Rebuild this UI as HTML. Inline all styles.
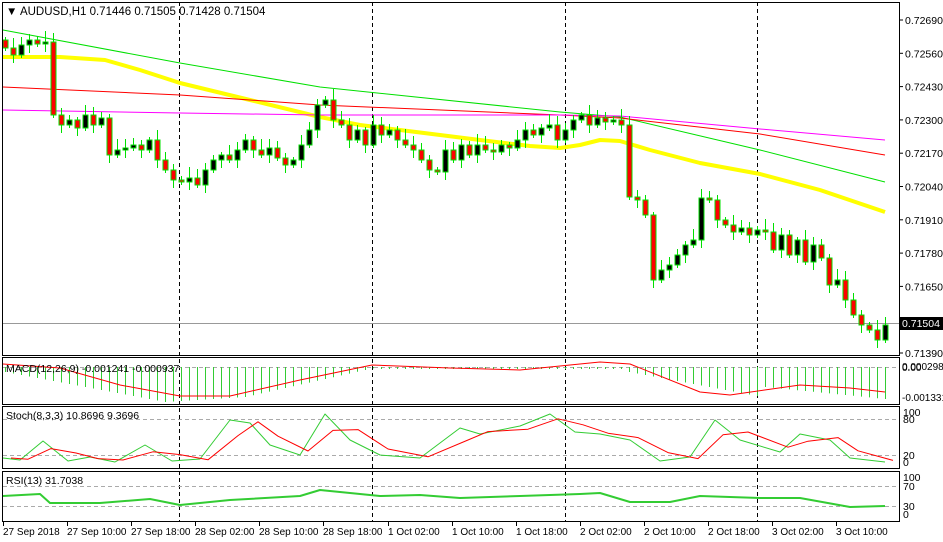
<!DOCTYPE html>
<html><head><meta charset="utf-8"><style>
html,body{margin:0;padding:0;background:#fff;width:943px;height:542px;overflow:hidden}
svg{display:block;font-family:"Liberation Sans",sans-serif;font-size:10.5px}
</style></head><body>
<svg id="s" width="943" height="542" xmlns="http://www.w3.org/2000/svg">
<rect width="943" height="542" fill="#fff"/>
<g id="grid" stroke="#000" stroke-dasharray="4,3" stroke-width="1">
<line x1="179.5" y1="2" x2="179.5" y2="521"/><line x1="372.5" y1="2" x2="372.5" y2="521"/>
<line x1="565.5" y1="2" x2="565.5" y2="521"/><line x1="757.5" y1="2" x2="757.5" y2="521"/>
</g>
<g stroke="#aaa" stroke-dasharray="4,3">
<line x1="3" y1="367.5" x2="899" y2="367.5"/>
<line x1="3" y1="419.5" x2="899" y2="419.5"/><line x1="3" y1="455.5" x2="899" y2="455.5"/>
<line x1="3" y1="486.5" x2="899" y2="486.5"/><line x1="3" y1="506.5" x2="899" y2="506.5"/>
</g>
<line x1="3" y1="323.5" x2="899" y2="323.5" stroke="#999"/>
<g id="ma" fill="none"></g>
<g id="cd"></g>
<g id="ind" fill="none"></g>
<g fill="none" stroke="#000" stroke-width="1">
<rect x="2.5" y="2.5" width="897" height="353"/>
<rect x="2.5" y="357.5" width="897" height="47"/>
<rect x="2.5" y="406.5" width="897" height="62"/>
<rect x="2.5" y="471.5" width="897" height="50"/>
</g>
<g fill="#000">
<text x="6" y="15" font-size="11.5">▼ AUDUSD,H1  0.71446 0.71505 0.71428 0.71504</text>
<text x="6" y="372">MACD(12,26,9) -0.001241 -0.000937</text>
<text x="6" y="419">Stoch(8,3,3) 10.8696 9.3696</text>
<text x="6" y="484">RSI(13) 31.7038</text>
<g id="pl"></g>
<g font-size="10">
<text x="902" y="370">0.000298</text><text x="902" y="371">0.00</text>
<text x="902" y="401">-0.001331</text>
</g>
<text x="903" y="416">100</text><text x="903" y="423">80</text><text x="903" y="459">20</text><text x="903" y="466">0</text>
<text x="903" y="481">100</text><text x="903" y="490">70</text><text x="903" y="510">30</text><text x="903" y="518">0</text>
<rect x="900" y="317" width="43" height="13"/>
<text x="902" y="327" fill="#fff">0.71504</text>
</g>
<g id="tx" fill="#000" font-size="10"></g>
</svg>
<script>
var N="http://www.w3.org/2000/svg";
function el(p,t,a,txt){var e=document.createElementNS(N,t);for(var k in a)e.setAttribute(k,a[k]);if(txt)e.textContent=txt;document.getElementById(p).appendChild(e);return e;}
var prices=["0.72690","0.72560","0.72430","0.72300","0.72170","0.72040","0.71910","0.71780","0.71650","0.71520","0.71390"];
prices.forEach(function(p,i){var y=20+i*33.3;el("pl","line",{x1:900,y1:y,x2:903,y2:y,stroke:"#000"});if(i!=9)el("pl","text",{x:905,y:y+4},p);});
var T=[["27 Sep 2018",3],["27 Sep 10:00",67],["27 Sep 18:00",131],["28 Sep 02:00",195],["28 Sep 10:00",259],["28 Sep 18:00",323],["1 Oct 02:00",388],["1 Oct 10:00",452],["1 Oct 18:00",516],["2 Oct 02:00",580],["2 Oct 10:00",644],["2 Oct 18:00",708],["3 Oct 02:00",772],["3 Oct 10:00",836]];
T.forEach(function(t){el("tx","line",{x1:t[1]+.5,y1:521,x2:t[1]+.5,y2:526,stroke:"#000"});el("tx","text",{x:t[1],y:535},t[0]);});
var C=[48,55,45,40,44,42,115,125,120,128,115,125,118,155,150,148,145,150,140,160,170,180,182,178,185,170,160,155,160,150,140,150,155,148,158,165,160,145,130,105,100,120,125,140,130,145,125,135,130,140,145,150,160,170,172,150,160,145,155,145,150,152,145,148,140,130,135,128,125,140,130,120,115,125,118,122,120,125,197,200,215,280,270,265,255,245,240,198,200,220,225,232,228,235,230,232,250,235,255,240,262,245,258,285,280,300,315,325,330,340,325];
var prev=40;
C.forEach(function(c,i){var x=5+8*i,o=prev,t=Math.min(o,c),b=Math.max(o,c);if(b-t<2){b=t+2;}
var hi=t-3-((i*7)%9),lo=b+3+((i*5)%10);
el("cd","line",{x1:x+.5,y1:hi,x2:x+.5,y2:lo,stroke:"#00e000"});
el("cd","rect",{x:x-2,y:t,width:5,height:b-t,fill:c>o?"#f00":"#000",stroke:"#00e000","stroke-width":1});prev=c;});
function pl(pts,col,w,g){el(g||"ma","polyline",{points:pts.map(function(p){return p.join(",")}).join(" "),stroke:col,"stroke-width":w,fill:"none","stroke-linejoin":"round"});}
pl([[3,57],[60,57],[105,60],[140,70],[180,83],[250,100],[320,117],[360,125],[400,130],[480,140],[530,146],[560,148],[580,145],[600,140],[620,141],[650,150],[700,163],[760,174],[820,190],[885,212]],"#ffff00",4);
pl([[3,30],[180,63],[320,87],[560,112],[620,117],[760,150],[885,182]],"#00e000",1);
pl([[3,87],[180,95],[320,105],[560,115],[620,118],[760,134],[885,155]],"#f00",1);
pl([[3,110],[180,113],[320,115],[560,115],[620,116],[760,129],[885,140]],"#f0f",1);
for(var i=0;i<111;i++){var x=5+8*i,v;
v=i<20?-5-i*1.5:i<30?-35+ (i-20)*0.5:i<47?-30+(i-30)*1.8:i<78?-2:i<95?-5-(i-78)*1.5:-20-(i-95)*0.8;
v=Math.min(v,-1);el("ind","line",{x1:x+.5,y1:367,x2:x+.5,y2:367-v,stroke:"#3c3"});}
pl([[3,364],[60,368],[120,385],[180,396],[230,396],[300,380],[372,365],[450,368],[520,370],[600,362],[630,364],[700,392],[730,395],[800,385],[850,388],[885,392]],"#f00",1,"ind");
var sg=[[3,458],[20,460],[43,441],[68,461],[90,457],[115,462],[145,445],[172,461],[200,459],[230,420],[250,423],[270,445],[300,455],[325,414],[350,440],[380,455],[420,458],[460,428],[480,434],[520,426],[550,414],[575,432],[600,434],[630,440],[660,461],[690,457],[715,420],[740,440],[780,452],[800,434],[830,440],[850,458],[885,462]];
pl(sg,"#3c3",1,"ind");
pl(sg.map(function(p,i){return [p[0]+8,i?sg[i-1][1]*0.4+p[1]*0.6:p[1]];}),"#f00",1,"ind");
pl([[3,496],[40,494],[50,503],[100,503],[150,499],[180,505],[230,500],[300,496],[320,490],[380,496],[420,495],[460,498],[520,496],[580,494],[600,493],[630,502],[670,502],[700,496],[760,498],[800,498],[850,507],[885,506]],"#3c3",2,"ind");
</script>
</body></html>
